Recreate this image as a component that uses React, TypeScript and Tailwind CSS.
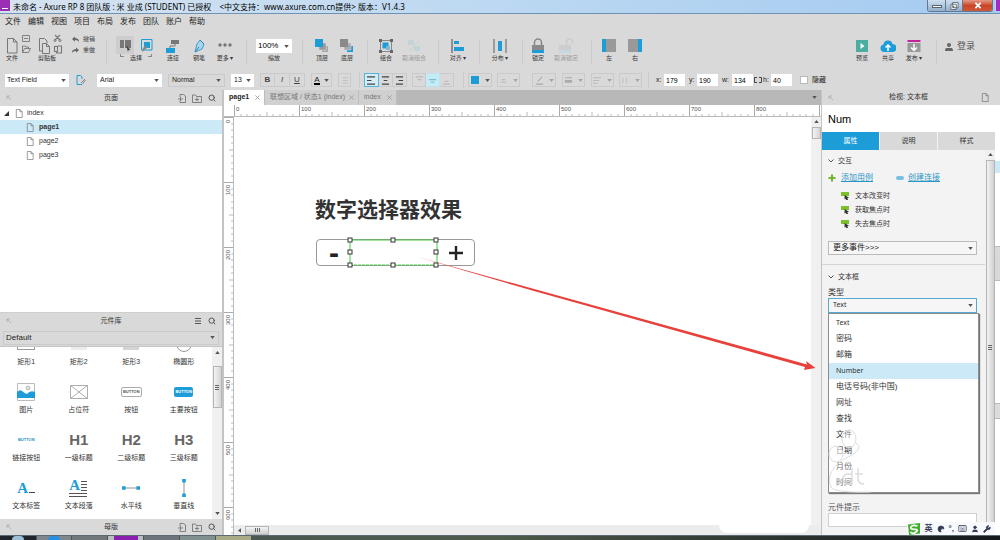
import type { ReactNode } from 'react'
import { Keyboard, Moon, Search, User, Wrench } from 'lucide-react'

const menus = ['文件', '编辑', '视图', '项目', '布局', '发布', '团队', '账户', '帮助']
const inputTypes = ['Text', '密码', '邮箱', 'Number', '电话号码(非中国)', '网址', '查找', '文件', '日期', '月份', '时间']
const events = ['文本改变时', '获取焦点时', '失去焦点时']

const Caret = ({ className = '' }: { className?: string }) => (
  <svg viewBox="0 0 6 4" className={`h-[3px] w-[5px] shrink-0 fill-[#555] ${className}`}>
    <path d="M0 0h6L3 4z" />
  </svg>
)

const Sep = ({ className = '' }: { className?: string }) => (
  <div className={`flex shrink-0 justify-center ${className}`}>
    <span className="h-6 w-px bg-[#cbcbcb]" />
  </div>
)

const Dropdown = ({ label, value, className = '', pad = 'pl-[3px]' }: { label: string; value: string; className?: string; pad?: string }) => (
  <div className={`relative flex shrink-0 items-center ${className}`}>
    <select aria-label={label} className={`h-full w-full appearance-none outline-none ${pad}`}>
      <option>{value}</option>
    </select>
    <Caret className="pointer-events-none absolute right-[3px]" />
  </div>
)

const DocIcon = ({ className = 'h-[10px] w-2' }: { className?: string }) => (
  <svg viewBox="0 0 8 10" className={`shrink-0 fill-none stroke-[#777] ${className}`} strokeWidth="0.8">
    <path d="M1 .5h4l2.500 2.500v6.500H1zM5 .5V3h2.500" />
  </svg>
)

// pin marker at the left of every panel header
const Pin = () => (
  <svg viewBox="0 0 6 6" className="h-[6px] w-[6px] fill-none stroke-[#aaa]" strokeWidth="0.8">
    <path d="M1 4V1h3M1 1l4 4" />
  </svg>
)

const AddPage = () => (
  <svg viewBox="0 0 8 9" className="h-[9px] w-2 fill-none stroke-[#777]" strokeWidth="0.9">
    <path d="M2 3V.5h3.500L7.500 2v6.500H2V7M0 5h5M2.500 3v4" />
  </svg>
)

const AddFolder = () => (
  <svg viewBox="0 0 10 9" className="h-[9px] w-[10px] fill-none stroke-[#777]" strokeWidth="0.9">
    <path d="M.5 8.500V1h3l1 1.500h5v6zM3 5.500h4M5 3.500v4" />
  </svg>
)

const PanelHeader = ({ title, className = 'h-4', children }: { title: string; className?: string; children?: ReactNode }) => (
  <header className={`flex shrink-0 items-center bg-[#d9d9d9] px-[6px] text-[7px] text-[#333] ${className}`}>
    <span className="flex flex-1"><Pin /></span>
    <h2>{title}</h2>
    <span className="flex flex-1 items-center justify-end gap-[6px]">{children}</span>
  </header>
)

const Tool = ({ label, width, muted, children }: { label: string; width: string; muted?: boolean; children: ReactNode }) => (
  <button className={`flex shrink-0 flex-col items-center pt-2 text-[6px] leading-[8px] whitespace-nowrap ${width} ${muted ? 'text-[#999]' : 'text-[#333]'}`}>
    <span className="flex h-4 items-center justify-center">{children}</span>
    <span>{label}</span>
  </button>
)

const Svg16 = ({ children, w = 'w-4' }: { children: ReactNode; w?: string }) => (
  <svg viewBox="0 0 16 16" className={`h-4 shrink-0 fill-none ${w}`}>{children}</svg>
)

const TitleBar = () => (
  <header className="flex h-[14px] shrink-0 items-start border-b border-[#6f93b5] bg-linear-to-r from-[#d6e2ef] via-[#bcd8f2] to-[#a4cbf0] text-black">
    <span className="flex h-[11px] w-[10px] items-end justify-center bg-[#9a2fb5] pb-[2px]"><i className="h-px w-[6px] bg-white" /></span>
    <h1 className="ml-[3px] flex-1 whitespace-pre text-[8px] leading-[13px] [font-family:'Noto_Sans','Noto_Sans_CJK_SC',sans-serif]">
      {'未命名 - Axure RP 8 团队版 : 米 业成 (STUDENT) 已授权    <中文支持：www.axure.com.cn提供> 版本：V1.4.3'}
    </h1>
    <div className="mr-[2px] flex h-3 overflow-hidden rounded-b-[3px] border border-t-0 border-[#64798f]">
      <button aria-label="最小化" className="flex w-[18px] items-end justify-center border-r border-[#64798f] bg-linear-to-b from-[#cfdfee] to-[#93b0cb] pb-[3px]">
        <span className="h-[3px] w-[10px] border border-[#59636d] bg-white" />
      </button>
      <button aria-label="还原" className="flex w-[17px] items-center justify-center border-r border-[#64798f] bg-linear-to-b from-[#cfdfee] to-[#93b0cb]">
        <svg viewBox="0 0 10 9" className="h-2 w-[9px] fill-white stroke-[#59636d]"><path d="M3 .5h6v6H3zM1 2.500h6v6H1zM3.500 5h1v1h-1z" /></svg>
      </button>
      <button aria-label="关闭" className="flex w-[29px] items-center justify-center bg-linear-to-b from-[#e39a86] via-[#cb4427] to-[#d0573a]">
        <svg viewBox="0 0 8 8" className="h-[7px] w-2 stroke-white" strokeWidth="2"><path d="M1 1l6 6M7 1L1 7" /></svg>
      </button>
    </div>
    <span className="h-[11px] w-[5px] border-l border-[#d9c4ee] bg-[#a02cc4]" />
  </header>
)

const Toolbar = () => (
  <div className="flex h-10 shrink-0">
    <div className="flex w-[35px] shrink-0 flex-col pt-2 pl-[6px] text-[6px] leading-[8px] text-[#333]">
      <svg viewBox="0 0 25 16" className="h-4 w-[25px] overflow-visible fill-none stroke-[#777]">
        <path d="M1.500.500h6l3.500 3.500v11H1.500zM7.500.500V4H11" />
        <path d="M16.500-2.500h7v6h-7zM18 .500h4M16.500 14.500V8h2.500l1 1h2.500v2M16.500 14.500h6l2-4h-6z" strokeWidth="0.900" />
      </svg>
      <span>文件</span>
    </div>
    <div className="flex w-[33px] shrink-0 flex-col pt-2 pl-[3px] text-[6px] leading-[8px] text-[#333]">
      <svg viewBox="0 0 25 16" className="h-4 w-[25px] overflow-visible fill-none stroke-[#777]">
        <path d="M4 13H1.500V.500h5L9 3v2M4.500 5.500h4l3 3v7h-7zM8.500 5.500v3h3" />
        <path d="M17-3l5 5M22-3l-5 5M16.500 8.500h3v5h-3zM19.500 8h4v7h-5V13.500" strokeWidth="1.100" />
        <circle cx="17" cy="2.500" r="1" /><circle cx="22" cy="2.500" r="1" />
      </svg>
      <span>剪贴板</span>
    </div>
    <div className="flex w-[32px] shrink-0 flex-col gap-[3px] pt-[5px] pl-1 text-[6px] leading-[8px] text-[#444]">
      <button className="flex items-center gap-1 whitespace-nowrap">
        <svg viewBox="0 0 8 6" className="h-[6px] w-[7px] fill-[#666]"><path d="M0 3l3.500-3v2C7 2 8 4 8 6 6.500 4.500 5.500 4 3.500 4v2z" /></svg>
        撤销
      </button>
      <button className="flex items-center gap-1 whitespace-nowrap">
        <svg viewBox="0 0 8 6" className="h-[6px] w-[7px] fill-[#666]"><path d="M8 3L4.500 0v2C1 2 0 4 0 6c1.500-1.500 2.500-2 4.500-2v2z" /></svg>
        重做
      </button>
    </div>
    <Sep className="w-3 pt-[10px]" />
    <div className="flex w-12 shrink-0 flex-col items-center pt-[6px] text-[6px] leading-[8px] text-[#333]">
      <div className="flex gap-1">
        <button aria-label="相交选中" className="flex h-[18px] w-[18px] items-center justify-center bg-[#cdcdcd]">
          <Svg16>
            <path d="M3 3h4v8H3zM8 3h6v8H8z" fill="#777" />
            <path d="M9 8l4.500 5-2 0-.500 2z" fill="#444" />
          </Svg16>
        </button>
        <button aria-label="包含选中" className="flex h-[18px] w-[18px] items-center justify-center">
          <Svg16>
            <path d="M2.500 2.500h10.500v10.500H2.500z" stroke="#1c9dd8" />
            <path d="M5 5h6v6H5z" fill="#1c9dd8" />
            <path d="M3 15l1-4 3-3 1 3z" fill="#888" />
          </Svg16>
        </button>
      </div>
      <span className="flex gap-[6px]">
        <i className="mb-1 h-[3px] w-1 border-b border-l border-[#888]" />
        选择
        <i className="mb-1 h-[3px] w-1 border-r border-b border-[#888]" />
      </span>
    </div>
    <Tool label="连接" width="w-[26px]">
      <Svg16><path d="M6 2h8v4H6z" fill="#777" /><path d="M1 10h9v5H1z" fill="#1c9dd8" /><path d="M10 6v2H5v2" stroke="#777" /></Svg16>
    </Tool>
    <Tool label="钢笔" width="w-[26px]">
      <Svg16><path d="M9 2l4 4-2 5-7 3 2-8z" fill="#a7d6ee" stroke="#3a9fcd" /><path d="M4 14l4-5M9 2l4 4" stroke="#3b7fa0" /></Svg16>
    </Tool>
    <Tool label="更多 ▾" width="w-[26px]">
      <Svg16><g fill="#777"><circle cx="3" cy="7" r="1.700" /><circle cx="8" cy="7" r="1.700" /><circle cx="13" cy="7" r="1.700" /></g></Svg16>
    </Tool>
    <Sep className="w-4 pt-[10px]" />
    <div className="flex w-10 shrink-0 flex-col items-center pt-[9px] text-[6px] leading-[8px] text-[#333]">
      <Dropdown label="缩放" value="100%" className="mb-px h-[14px] w-9 bg-white text-[8px] text-black" pad="pl-[2px]" />
      <span>缩放</span>
    </div>
    <Sep className="w-4 pt-[10px]" />
    <Tool label="顶层" width="w-6">
      <Svg16><path d="M8 8h6v6H8z" fill="#aaa" /><path d="M5 5h7v7H5z" fill="#999" stroke="#d9d9d9" strokeWidth=".5" /><path d="M1 1h8v8H1z" fill="#1c9dd8" /></Svg16>
    </Tool>
    <Tool label="底层" width="w-[26px]">
      <Svg16><path d="M8 8h6v6H8z" fill="#1c9dd8" /><path d="M5 5h7v7H5z" fill="#aaa" stroke="#d9d9d9" strokeWidth=".5" /><path d="M1 1h8v8H1z" fill="#8a8a8a" /></Svg16>
    </Tool>
    <Sep className="w-[14px] pt-[10px]" />
    <Tool label="组合" width="w-6">
      <Svg16><path d="M2.500 2.500h11v11h-11z" stroke="#888" /><path d="M4.500 4.500h6v6h-6z" fill="#1c9dd8" /><path d="M8 8h4v4H8z" fill="#7fb9d6" /><path d="M1 1h3v3H1zM12 1h3v3h-3zM1 12h3v3H1zM12 12h3v3h-3z" fill="#666" /></Svg16>
    </Tool>
    <Tool label="取消组合" width="w-8" muted>
      <Svg16><path d="M2 2h6v5H2zM8 8h6v5H8z" fill="#c3d3da" /><path d="M3 13L13 3" stroke="#c8cdd0" /></Svg16>
    </Tool>
    <Sep className="w-4 pt-[10px]" />
    <Tool label="对齐 ▾" width="w-6">
      <Svg16><path d="M2 1v14" stroke="#777" strokeWidth="1.500" /><path d="M4 3h5v3H4zM4 9h10v4H4z" fill="#1c9dd8" /></Svg16>
    </Tool>
    <Sep className="w-[18px] pt-[10px]" />
    <Tool label="分布 ▾" width="w-6">
      <Svg16><path d="M2 1v14M14 1v14" stroke="#888" strokeWidth="1.500" /><path d="M6 3h4v10H6z" fill="#1c9dd8" /></Svg16>
    </Tool>
    <Sep className="w-5 pt-[10px]" />
    <Tool label="锁定" width="w-3">
      <Svg16><path d="M4.500 8V4.500a3.500 3.500 0 017 0V8" stroke="#888" strokeWidth="1.500" /><path d="M2 7h12v5H2z" fill="#8a8a8a" /><path d="M2 12h12v3H2z" fill="#1c9dd8" /></Svg16>
    </Tool>
    <Tool label="取消锁定" width="w-11" muted>
      <Svg16><path d="M8.500 7V4a3 3 0 016 0v2" stroke="#c8cdd0" strokeWidth="1.500" /><path d="M1 7h12v5H1z" fill="#cdcdcd" /><path d="M1 12h12v3H1z" fill="#c5d8e0" /></Svg16>
    </Tool>
    <Sep className="w-[6px] pt-[10px]" />
    <Tool label="左" width="w-[30px]">
      <Svg16><path d="M1 1h4v13H1z" fill="#1c9dd8" /><path d="M5 1h10v13H5z" fill="#999" /></Svg16>
    </Tool>
    <Tool label="右" width="w-[22px]">
      <Svg16><path d="M1 1h10v13H1z" fill="#999" /><path d="M11 1h4v13h-4z" fill="#1c9dd8" /></Svg16>
    </Tool>
    <div className="flex-1" />
    <Tool label="预览" width="w-[26px]">
      <Svg16><path d="M2 2h12v12H2z" fill="#4bada0" /><path d="M6.500 5v6l4-3z" fill="#fff" /></Svg16>
    </Tool>
    <Tool label="共享" width="w-[26px]">
      <Svg16><path d="M4 14a3.800 3.800 0 01-.500-7.500 4.600 4.600 0 019-.500A4 4 0 0112.500 14z" fill="#1c9dd8" /><path d="M8 13V8M5.500 9.500L8 7l2.500 2.500" stroke="#fff" strokeWidth="1.500" /></Svg16>
    </Tool>
    <Tool label="发布 ▾" width="w-[26px]">
      <Svg16><path d="M1.500 5h13v9h-13z" fill="#999" /><path d="M1.500 2h13v2h-13z" fill="#c4249b" /><path d="M8 6v6M5 9.500L8 12.500l3-3" stroke="#fff" strokeWidth="1.500" /></Svg16>
    </Tool>
    <Sep className="w-[18px] pt-[10px]" />
    <button className="flex w-[55px] items-center gap-1 pb-[6px] text-[9px] text-[#555]">
      <svg viewBox="0 0 8 8" className="h-2 w-2 fill-[#666]"><circle cx="4" cy="2" r="2" /><path d="M0 8c0-4 2-3 4-3s4-1 4 3z" /></svg>
      登录
    </button>
  </div>
)

const Box = ({ className, children, label }: { className: string; children?: ReactNode; label: string }) => (
  <button aria-label={label} className={`flex h-[14px] shrink-0 items-center justify-center border ${className}`}>{children}</button>
)

const Lines = ({ d, className = 'stroke-[#444]' }: { d: string; className?: string }) => (
  <svg viewBox="0 0 10 10" className={`h-[9px] w-[9px] fill-none ${className}`} strokeWidth="1.2"><path d={d} /></svg>
)

const Coord = ({ name, value, className }: { name: string; value: string; className: string }) => (
  <label className={`flex shrink-0 items-center justify-between text-[7px] ${className}`}>
    {name}:
    <input defaultValue={value} className="h-3 w-[21px] bg-white pl-[2px] text-[7px] text-black outline-none" />
  </label>
)

const FormatBar = () => (
  <div className="flex h-5 shrink-0 items-center pl-[5px] text-[7px] text-[#222]">
    <Dropdown label="元件样式" value="Text Field" className="h-[13px] w-16 bg-white" pad="pl-[2px]" />
    <svg viewBox="0 0 10 10" className="ml-[7px] h-[10px] w-[10px] shrink-0 fill-none" strokeWidth="1">
      <path d="M6 9.500H1v-9h3.500L6 2v2" stroke="#1c9dd8" /><path d="M5 8l4-4M6.500 9L9.500 5" stroke="#888" />
    </svg>
    <Dropdown label="字体" value="Arial" className="ml-[11px] h-[13px] w-[65px] bg-white" />
    <Dropdown label="字形" value="Normal" className="ml-[6px] h-[13px] w-[57px] border border-[#cacaca]" />
    <Dropdown label="字号" value="13" className="ml-[6px] h-[13px] w-[23px] bg-white" />
    <div className="ml-[6px] flex shrink-0 text-[8px] text-[#444]">
      <Box label="粗体" className="w-[15px] border-[#cacaca] font-bold">B</Box>
      <Box label="斜体" className="w-[15px] border-l-0 border-[#cacaca] italic">I</Box>
      <Box label="下划线" className="w-[15px] border-l-0 border-[#cacaca] underline">U</Box>
    </div>
    <Box label="文字颜色" className="ml-[6px] w-[21px] gap-1 border-[#cacaca]">
      <span className="border-b-2 border-black text-[8px] leading-[7px]">A</span><Caret />
    </Box>
    <Box label="项目符号" className="ml-[6px] w-[13px] border-[#cacaca]"><Lines d="M3 2h6M3 5h6M3 8h6" className="stroke-[#c2c2c2]" /></Box>
    <span className="ml-2 h-4 w-px bg-[#cbcbcb]" />
    <div className="ml-1 flex shrink-0">
      <Box label="左对齐" className="w-[15px] border-[#56b4da] bg-[#d3edf8]"><Lines d="M0 1h9M0 5h5M0 9h9" /></Box>
      <Box label="居中" className="w-[14px] border-l-0 border-[#cacaca]"><Lines d="M1 1h8M3 5h4M1 9h8" /></Box>
      <Box label="右对齐" className="w-[14px] border-l-0 border-[#cacaca]"><Lines d="M1 1h8M4 5h5M1 9h8" /></Box>
    </div>
    <div className="ml-[5px] flex shrink-0">
      <Box label="顶部对齐" className="w-[14px] border-[#cacaca]"><Lines d="M1 1h8M3 4h4" className="stroke-[#bbb]" /></Box>
      <Box label="中部对齐" className="w-[14px] border-l-0 border-[#bfe3ee] bg-[#c3ecf6]"><Lines d="M1 4h8M3 7h4" className="stroke-[#7fb9cc]" /></Box>
      <Box label="底部对齐" className="w-[14px] border-l-0 border-[#cacaca]"><Lines d="M3 6h4M1 9h8" className="stroke-[#bbb]" /></Box>
    </div>
    <span className="ml-[9px] h-4 w-px bg-[#cbcbcb]" />
    <Box label="填充颜色" className="ml-1 w-6 gap-[6px] border-[#cacaca]"><span className="h-2 w-2 bg-[#1c9dd8]" /><Caret /></Box>
    <Box label="阴影" className="ml-[5px] w-[23px] gap-[5px] border-[#cacaca]"><Lines d="M2 7h6M3 4l4 0" className="stroke-[#bbb]" /><Caret className="opacity-40" /></Box>
    <Box label="线条颜色" className="ml-3 w-6 gap-[5px] border-[#cacaca]"><Lines d="M1 9h8M3 6l5-5" className="stroke-[#aaa]" /><Caret className="opacity-40" /></Box>
    <Box label="线宽" className="ml-[6px] w-[23px] gap-[5px] border-[#cacaca]"><Lines d="M1 2h8M1 5h8M1 7h8M1 6h8" className="stroke-[#aaa]" /><Caret className="opacity-40" /></Box>
    <Box label="线型" className="ml-[6px] w-[23px] gap-[5px] border-[#cacaca]"><Lines d="M0 2h9M0 5h7M0 8h5" className="stroke-[#bbb]" /><Caret className="opacity-40" /></Box>
    <Box label="箭头" className="ml-[5px] w-[23px] gap-[5px] border-[#cacaca]"><Lines d="M2 2v6M6 2v6" className="stroke-[#c2c2c2]" /><Caret className="opacity-40" /></Box>
    <span className="ml-[6px] h-4 w-px bg-[#cbcbcb]" />
    <Coord name="x" value="179" className="ml-[7px] w-[29px]" />
    <Coord name="y" value="190" className="ml-1 w-[29px]" />
    <Coord name="w" value="134" className="ml-1 w-[31px]" />
    <svg viewBox="0 0 8 8" className="ml-px h-2 w-2 shrink-0 fill-none stroke-[#444]"><path d="M3 1.500H.5v5H3M5 1.500h2.500v5H5" /></svg>
    <Coord name="h" value="40" className="ml-px w-[29px]" />
    <label className="ml-2 flex shrink-0 items-center gap-1">
      <input type="checkbox" className="h-2 w-2 appearance-none border border-[#bbb] bg-white" />
      隐藏
    </label>
  </div>
)

const PageTree = () => (
  <ul className="flex-1 bg-white text-[7px] text-[#333]">
    <li className="flex h-[14px] items-center pl-1">
      <svg viewBox="0 0 6 6" className="h-[5px] w-[5px] fill-[#333]"><path d="M6 0v6H0z" /></svg>
      <DocIcon className="mr-1 ml-[6px] h-[9px] w-2" />
      index
    </li>
    {['page1', 'page2', 'page3'].map((page, i) => (
      <li key={page} className={`flex h-[14px] items-center gap-[5px] pl-[26px] ${i === 0 ? 'bg-[#cbe9f7] font-bold' : ''}`}>
        <DocIcon className="h-[9px] w-2" />
        {page}
      </li>
    ))}
  </ul>
)

const Heading = ({ children }: { children: ReactNode }) => <b className="text-[15px] text-[#666]">{children}</b>

const widgets: [string, ReactNode][] = [
  ['矩形1', <span className="h-3 w-[18px] border border-[#999]" />],
  ['矩形2', <span className="h-3 w-4 bg-[#ececec]" />],
  ['矩形3', <span className="h-3 w-4 bg-[#d5d5d5]" />],
  ['椭圆形', <span className="h-4 w-4 rounded-full border border-[#999]" />],
  ['图片', (
    <svg viewBox="0 0 18 18" className="h-[18px] w-[18px]">
      <path d="M.5.5h17v17H.5z" fill="#fff" stroke="#bbb" /><circle cx="11" cy="5" r="2" fill="#ddd" stroke="#aaa" strokeWidth=".7" />
      <path d="M0 15V9q3-3 5-1t5 3q3-4 8-2v6z" fill="#1c9dd8" />
    </svg>
  )],
  ['占位符', <svg viewBox="0 0 18 14" className="h-[14px] w-[18px] fill-none stroke-[#999]" strokeWidth=".8"><path d="M.5.5h17v13H.5zM.5.5l17 13M17.500.5L.5 13.500" /></svg>],
  ['按钮', <span className="rounded-[2px] border border-[#aaa] px-px text-[4px] leading-[8px] font-bold text-[#555]">BUTTON</span>],
  ['主要按钮', <span className="rounded-[2px] bg-[#1c9dd8] px-px text-[4px] leading-[10px] font-bold text-white">BUTTON</span>],
  ['链接按钮', <span className="text-[4px] font-bold text-[#2a8fc4]">BUTTON</span>],
  ['一级标题', <Heading>H1</Heading>],
  ['二级标题', <Heading>H2</Heading>],
  ['三级标题', <Heading>H3</Heading>],
  ['文本标签', (
    <span className="flex items-end gap-px">
      <b className="text-[15px] leading-[14px] text-[#1c9dd8] [font-family:'Liberation_Serif',serif]">A</b>
      <i className="mb-[2px] h-px w-[6px] bg-[#444]" />
    </span>
  )],
  ['文本段落', (
    <span className="flex flex-col">
      <span className="flex items-center">
        <b className="text-[15px] leading-[13px] text-[#1c9dd8] [font-family:'Liberation_Serif',serif]">A</b>
        <svg viewBox="0 0 8 12" className="h-3 w-2 stroke-[#555]"><path d="M1 1.500h6M1 4.500h6M1 7.500h6M1 10.500h6" /></svg>
      </span>
      <i className="mt-px h-[4px] w-[18px] border-y border-[#555]" />
    </span>
  )],
  ['水平线', <svg viewBox="0 0 18 4" className="h-1 w-[18px]"><path d="M2 2h14" stroke="#777" strokeWidth=".8" /><path d="M0 .2h3.600v3.600H0zM14.400.2H18v3.600h-3.600z" fill="#1c9dd8" /></svg>],
  ['垂直线', <svg viewBox="0 0 4 18" className="h-[18px] w-1"><path d="M2 2v14" stroke="#777" strokeWidth=".8" /><path d="M.2 0h3.600v3.600H.2zM.2 14.400h3.600V18H.2z" fill="#1c9dd8" /></svg>],
]

const Library = () => (
  <section className="shrink-0">
    <PanelHeader title="元件库" className="h-[17px] border-t border-[#cfcfcf]">
      <svg viewBox="0 0 8 8" className="h-2 w-2 stroke-[#555]"><path d="M1 1.500h6M1 4h6M1 6.500h6" /></svg>
      <Search className="h-2 w-2 text-[#555]" strokeWidth={3} />
    </PanelHeader>
    <div className="flex h-[18px] items-center border-b border-[#c4c4c4] bg-[#d9d9d9] px-[3px]">
      <Dropdown label="元件库" value="Default" className="h-[14px] w-full border border-[#cacaca] text-[8px] text-[#222]" pad="pl-[2px]" />
    </div>
    <div className="flex h-[172px] bg-white">
      <div className="flex-1 overflow-hidden">
        <div className="-mt-6 grid grid-cols-4 pr-[2px]">
          {widgets.map(([name, icon]) => (
            <div key={name} className="flex h-12 flex-col items-center pt-[7px]">
              <span className="flex h-7 items-center justify-center">{icon}</span>
              <span className="text-[7px] leading-[8px] whitespace-nowrap text-[#333]">{name}</span>
            </div>
          ))}
        </div>
      </div>
      <div className="flex w-[10px] flex-col items-center bg-[#f0f0f0] py-1">
        <Caret className="rotate-180" />
        <span className="mt-3 flex h-[42px] w-[9px] flex-col items-center justify-center gap-px border border-[#b5b5b5] bg-linear-to-r from-[#f3f3f3] to-[#d4d4d4]">
          <i className="h-px w-1 bg-[#666]" /><i className="h-px w-1 bg-[#666]" /><i className="h-px w-1 bg-[#666]" />
        </span>
        <Caret className="mt-auto" />
      </div>
    </div>
    <PanelHeader title="母版"><AddPage /><AddFolder /><Search className="h-2 w-2 text-[#555]" strokeWidth={3} /></PanelHeader>
  </section>
)

const TopRuler = () => (
  <div className="flex h-3 shrink-0 overflow-hidden border-b border-[#bbb] bg-white pl-[10px]">
    {[0, 100, 200, 300, 400, 500, 600, 700, 800, 900].map((n) => (
      <span key={n} className="relative flex w-[65px] shrink-0 border-l border-[#aaa] pl-px text-[6px] leading-[9px] text-[#555]">
        {n}
        <svg viewBox="0 0 65 4" className="absolute right-0 bottom-0 h-1 w-[65px] stroke-[#bbb]">
          <path d="M7 2v2M13 2v2M20 2v2M26 2v2M33 0v4M39 2v2M46 2v2M52 2v2M59 2v2" />
        </svg>
      </span>
    ))}
  </div>
)

const SideRuler = () => (
  <div className="flex w-[10px] shrink-0 flex-col overflow-hidden border-r border-[#bbb] bg-white">
    {[0, 100, 200, 300, 400, 500, 600].map((n) => (
      <span key={n} className="relative h-[65px] shrink-0 border-t border-[#aaa] text-[6px] leading-[8px] text-[#555]">
        <span className="mt-[2px] block rotate-180 [writing-mode:vertical-rl]">{n}</span>
        <svg viewBox="0 0 4 65" className="absolute right-0 bottom-0 h-[65px] w-1 stroke-[#bbb]">
          <path d="M2 7h2M2 13h2M2 20h2M2 26h2M0 33h4M2 39h2M2 46h2M2 52h2M2 59h2" />
        </svg>
      </span>
    ))}
  </div>
)

const Tab = ({ name, active, className }: { name: string; active?: boolean; className: string }) => (
  <button className={`flex items-center justify-between border-r border-[#bdbdbd] pr-1 pl-[5px] text-[7px] whitespace-nowrap ${active ? 'bg-white font-bold text-[#222]' : 'bg-[#d0d0d0] text-[#777]'} ${className}`}>
    {name}
    <svg viewBox="0 0 6 6" className="h-[5px] w-[5px] stroke-[#999]"><path d="M.5.5l5 5M5.500.5l-5 5" /></svg>
  </button>
)

const Canvas = () => (
  <main className="flex min-w-0 flex-1 flex-col bg-white">
    <div className="flex h-[15px] shrink-0 bg-[#b8b8b8]">
      <Tab name="page1" active className="w-[41px]" />
      <Tab name="联想区域 / 状态1 (index)" className="w-[94px]" />
      <Tab name="index" className="w-[38px]" />
      <span className="ml-auto flex items-center pr-1"><Caret /></span>
    </div>
    <TopRuler />
    <div className="flex min-h-0 flex-1">
      <SideRuler />
      <div className="flex min-w-0 flex-1 flex-col">
        <div className="flex min-h-0 flex-1">
          <div className="relative flex-1">
            <h3 className="absolute top-[80px] left-[81px] text-[21px] leading-[26px] font-bold whitespace-nowrap text-[#333]">数字选择器效果</h3>
            <div className="absolute top-[122px] left-[82px] flex h-[27px] w-[159px] rounded-[4px] border border-[#999] text-[#222]">
              <button className="w-[34px] text-[30px] leading-[25px] font-bold">-</button>
              <input aria-label="Num" className="w-[87px] outline-none" />
              <button aria-label="+" className="flex flex-1 items-center justify-center">
                <svg viewBox="0 0 16 16" className="h-4 w-4 stroke-[#222]" strokeWidth="2.4"><path d="M8 1v14M1 8h14" /></svg>
              </button>
            </div>
            {/* selection frame with its handles, and the red pointer line */}
            <svg className="pointer-events-none absolute top-0 left-0 z-10 h-px w-px overflow-visible">
              <path d="M116 148V123h87v25" fill="none" stroke="#3fc93f" />
              <path d="M116 148h87" stroke="#3fd03f" strokeDasharray="3 1" />
              <g fill="#fff" stroke="#333">
                {[[116, 123], [159, 123], [202, 123], [116, 135], [202, 135], [116, 148], [159, 148], [202, 148]].map(([x, y]) => (
                  <rect key={`${x}-${y}`} x={x - 2} y={y - 2} width="4" height="4" />
                ))}
              </g>
              <path d="M184 140l389 107.500-1 -3.500 9.500 7-11.500 2 1-3L300 174z" fill="#e8413c" />
            </svg>
          </div>
          <div className="flex w-[10px] flex-col items-center gap-1 bg-[#f0f0f0] pt-[3px]">
            <Caret className="rotate-180" />
            <span className="h-3 w-[9px] border border-[#b5b5b5] bg-linear-to-r from-[#f3f3f3] to-[#d4d4d4]" />
          </div>
        </div>
        <div className="relative flex h-[10px] shrink-0 items-center gap-[3px] bg-[#ececec] pl-[3px]">
          <Caret className="rotate-90" />
          <span className="flex h-[9px] w-6 items-center justify-center gap-px border border-[#b5b5b5] bg-linear-to-b from-[#f3f3f3] to-[#d0d0d0]">
            <i className="h-1 w-px bg-[#666]" /><i className="h-1 w-px bg-[#666]" /><i className="h-1 w-px bg-[#666]" />
          </span>
          <span className="absolute top-0 right-[12px] h-2 w-[90px] rounded-b-[8px] bg-white" />
        </div>
      </div>
    </div>
  </main>
)

const SectionTitle = ({ children }: { children: ReactNode }) => (
  <h4 className="flex items-center gap-1 text-[7px] leading-[10px] text-[#333]">
    <svg viewBox="0 0 6 4" className="h-1 w-[6px] fill-none stroke-[#555]"><path d="M.5.5L3 3l2.500-2.500" /></svg>
    {children}
  </h4>
)

const Inspector = () => (
  <aside className="flex w-[174px] shrink-0 flex-col border-l border-[#c4c4c4] bg-[#f3f3f3]">
    <PanelHeader title="检视: 文本框" className="h-[15px]"><DocIcon className="h-[9px] w-2" /></PanelHeader>
    <input aria-label="名称" defaultValue="Num" className="h-[27px] shrink-0 bg-white pl-[6px] text-[11px] text-black outline-none" />
    <div className="grid h-[18px] shrink-0 grid-cols-3 gap-px text-[7px] text-[#333]">
      <button className="bg-[#1c9dd8] text-white">属性</button>
      <button className="bg-[#d9d9d9]">说明</button>
      <button className="bg-[#d9d9d9]">样式</button>
    </div>
    <div className="flex min-h-0 flex-1">
      <div className="min-w-0 flex-1">
        <div className="h-[115px] border-b border-[#d5d5d5] pt-[6px] pr-2 pl-[6px]">
          <SectionTitle>交互</SectionTitle>
          <div className="mt-[6px] flex items-center text-[8px] leading-[11px] text-[#2a96c8]">
            <svg viewBox="0 0 8 8" className="mr-[5px] h-2 w-2 stroke-[#6cb52d]" strokeWidth="2"><path d="M4 .5v7M.5 4h7" /></svg>
            <a href="#case" className="w-[55px] underline">添加用例</a>
            <i className="mr-1 h-1 w-2 rounded-[2px] bg-[#79bfe2]" />
            <a href="#link" className="underline">创建连接</a>
          </div>
          <ul className="mt-[6px] flex flex-col text-[7px] text-[#333]">
            {events.map((name) => (
              <li key={name} className="flex h-[14px] items-center gap-[6px] pl-[13px]">
                <svg viewBox="0 0 9 9" className="h-2 w-2"><path d="M0 0h9v4.500H0z" fill="#7cc02e" /><path d="M4 3.500l5 3-2 .5 1 2H6L5 7.500l-1 1z" fill="#333" /></svg>
                {name}
              </li>
            ))}
          </ul>
          <Dropdown label="更多事件" value="更多事件>>>" className="mt-[10px] h-[14px] w-[149px] border border-[#bbb] bg-[#f6f6f6] text-[8px] text-[#222]" pad="pl-1" />
        </div>
        <div className="pt-[7px] pl-[6px]">
          <SectionTitle>文本框</SectionTitle>
          <h5 className="mt-[5px] text-[8px] leading-[11px] text-[#333]">类型</h5>
          <div className="relative w-[151px] text-[8px] text-[#333]">
            <Dropdown label="类型" value="Text" className="h-[15px] w-[149px] border border-[#56a9cf] bg-[#f6f6f6] text-[7px] [font-family:'Noto_Sans',sans-serif]" pad="pl-1" />
            <ul role="listbox" aria-label="类型" className="absolute top-[15px] left-0 z-10 w-full border border-[#8d8d8d] bg-white py-px shadow-[1px_1px_1px_#777]">
              {inputTypes.map((type) => (
                <li
                  key={type}
                  role="option"
                  aria-selected={type === 'Number'}
                  className={`flex h-4 items-center pl-[7px] ${type === 'Number' ? 'bg-[#cbe9f7]' : ''} ${/^[A-Z]/.test(type) ? "text-[7px] [font-family:'Noto_Sans',sans-serif]" : ''}`}
                >
                  {type}
                </li>
              ))}
            </ul>
            {/* faded watermark */}
            <svg viewBox="0 0 70 95" className="pointer-events-none absolute top-[127px] -left-[4px] z-20 h-[95px] w-[70px] fill-none stroke-[#dcdcdc]" strokeWidth="1">
              <ellipse cx="25" cy="14" rx="7" ry="9" fill="#fff" fillOpacity=".4" />
              <ellipse cx="12" cy="29" rx="7" ry="8" fill="#fff" fillOpacity=".5" />
              <path d="M28 30C10 38 2 50 7 62q3 6 40 5M28 30q12-8 4-12" fill="#fff" fillOpacity=".3" />
              <path d="M28 49h-5q-4 1-4 5t4 5h5V43M34 43v12q1 4 6 4M31 49h8" strokeWidth="1.500" />
            </svg>
          </div>
          <label className="mt-[189px] block w-[149px] text-[8px] leading-[11px] text-[#555]">
            元件提示
            <input className="block h-[14px] w-full border border-[#d0d0d0] bg-white outline-none" />
          </label>
        </div>
      </div>
      <div className="flex w-[10px] flex-col items-center gap-1 bg-[#f0f0f0] pt-[3px]">
        <Caret className="rotate-180" />
        <span className="flex w-[9px] flex-1 flex-col items-center justify-center gap-px border border-[#b5b5b5] bg-linear-to-r from-[#f3f3f3] to-[#d0d0d0]">
          <i className="h-px w-1 bg-[#666]" /><i className="h-px w-1 bg-[#666]" /><i className="h-px w-1 bg-[#666]" />
        </span>
      </div>
    </div>
  </aside>
)

const ImeBar = () => (
  <div className="absolute right-[5px] bottom-[5px] z-30 flex h-[13px] items-center gap-1 bg-[#f8f9fd] pr-1 text-[8px] font-bold text-[#333a55]">
    <svg viewBox="0 0 14 12" className="h-3 w-[14px]">
      <path d="M1 1.500L13 0v10.500L2 12z" fill="#3eae2b" />
      <path d="M10.500 3Q5 1.500 4 4t3.500 2.300T9 9 3.500 9" fill="none" stroke="#fff" strokeWidth="1.800" />
    </svg>
    <span>英</span>
    <Moon className="h-2 w-2 rotate-90 fill-[#333a55]" />
    <span>°,</span>
    <Keyboard className="h-[9px] w-[9px]" />
    <User className="h-2 w-2 fill-[#333a55]" />
    <Wrench className="h-2 w-2 fill-[#333a55]" />
  </div>
)

const App = () => (
  <div className="relative flex h-screen w-full flex-col overflow-hidden bg-[#d9d9d9] [font-family:'Liberation_Sans','Noto_Sans_CJK_SC',sans-serif]">
    <TitleBar />
    <nav className="flex h-4 shrink-0 items-center gap-[7px] pl-[5px] text-[8px] text-[#222]">
      {menus.map((name) => <button key={name}>{name}</button>)}
    </nav>
    <Toolbar />
    <FormatBar />
    <div className="flex min-h-0 flex-1">
      <aside className="flex w-56 shrink-0 flex-col border-r-2 border-[#c4c4c4]">
        <PanelHeader title="页面"><AddPage /><AddFolder /><Search className="h-2 w-2 text-[#555]" strokeWidth={3} /></PanelHeader>
        <PageTree />
        <Library />
      </aside>
      <Canvas />
      <Inspector />
      {/* edge of the window behind */}
      <div className="flex w-[5px] shrink-0 flex-col bg-white">
        <span className="h-[15px] bg-[#d9d9d9]" />
        <span className="mt-14 h-3 bg-[#cbe9f7]" />
        <span className="mt-[73px] h-[35px] border-y border-[#bbb] bg-[#d9d9d9]" />
        <span className="mt-[122px] h-4 border-y border-[#bbb] bg-[#dcdcdc]" />
      </div>
    </div>
    <footer className="flex h-[5px] shrink-0 gap-px border-t border-[#5c6a70] bg-linear-to-r from-[#49545b] via-[#4d5b4a] to-[#15191c]">
      <span className="flex w-9 justify-center bg-[#20262b]"><i className="w-3 rounded-t-full bg-[#9fc0d6]" /></span>
      <span className="flex w-[34px] justify-center bg-[#7e878b]"><i className="w-3 rounded-t-full bg-[#2b8fe0]" /></span>
      <span className="w-[35px] bg-[#70787c]" />
      <span className="flex w-[35px] justify-center bg-[#b9bec0]"><i className="w-6 bg-[#8a1fb0]" /></span>
      <span className="w-[35px] bg-[#6d757a]" />
      <span className="w-[35px] bg-[#80908f]" />
      <span className="w-[35px] bg-[#a9aa86]" />
    </footer>
    <ImeBar />
  </div>
)

export default App
